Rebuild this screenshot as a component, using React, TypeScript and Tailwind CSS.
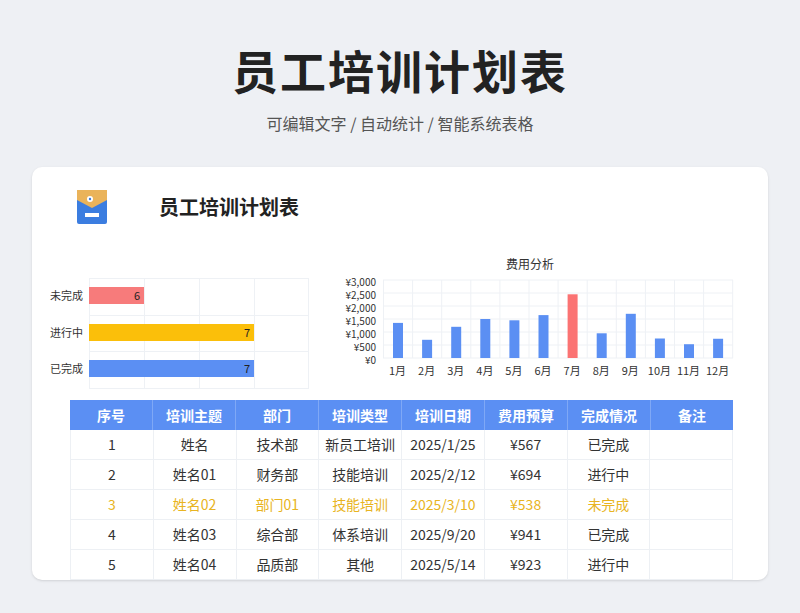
const F = { fontFamily: '"Noto Sans CJK SC","Noto Sans",sans-serif' };
const months = [1350, 700, 1200, 1500, 1450, 1650, 2450, 950, 1700, 750, 530, 740];
const rows = [
  ["1", "姓名", "技术部", "新员工培训", "2025/1/25", "¥567", "已完成"],
  ["2", "姓名01", "财务部", "技能培训", "2025/2/12", "¥694", "进行中"],
  ["3", "姓名02", "部门01", "技能培训", "2025/3/10", "¥538", "未完成"],
  ["4", "姓名03", "综合部", "体系培训", "2025/9/20", "¥941", "已完成"],
  ["5", "姓名04", "品质部", "其他", "2025/5/14", "¥923", "进行中"],
];
const heads = ["序号", "培训主题", "部门", "培训类型", "培训日期", "费用预算", "完成情况", "备注"];

export default function App() {
  return (
    <div style={F} className="w-[800px] h-[613px] bg-[#eef0f4] flex flex-col items-center overflow-hidden">
      <div className="mt-[38px] h-[62px] text-[46px] leading-[62px] font-bold text-[#222] tracking-[2px]">员工培训计划表</div>
      <div className="mt-[11px] text-[16px] leading-[24px] text-[#555]">可编辑文字 / 自动统计 / 智能系统表格</div>
      <div className="mt-[32px] w-[736px] h-[413px] bg-white rounded-[10px] overflow-hidden flex flex-col shadow-sm">
        <div className="flex items-center h-[78px] pt-[6px]">
          <svg width="30" height="34" viewBox="0 0 30 34" className="ml-[45px]">
            <rect x="0" y="0" width="30" height="34" rx="2" fill="#3b7de0" />
            <path d="M0 0H30V10L15 18L0 10Z" fill="#eab35a" />
            <circle cx="13" cy="9" r="3" fill="#fff" />
            <circle cx="13" cy="9" r="1.2" fill="#3b7de0" />
            <rect x="8" y="23" width="14" height="4" fill="#fff" />
          </svg>
          <div className="ml-[52px] text-[20px] font-bold text-[#222]">员工培训计划表</div>
        </div>
        <div className="flex h-[160px]">
          <div className="relative w-[300px] h-[160px]">
            {[57, 112, 167, 222, 276].map((x) => (
              <div key={x} className="absolute top-[38px] h-[110px] w-px bg-[#eef1f5]" style={{ left: x }} />
            ))}
            {[38, 75, 111, 148].map((y) => (
              <div key={y} className="absolute left-[57px] w-[220px] h-px bg-[#eef1f5]" style={{ top: y }} />
            ))}
            {[
              ["未完成", 55, "#f77b7b", "6", 47],
              ["进行中", 165, "#fbbf0a", "7", 84],
              ["已完成", 165, "#5b8ff3", "7", 120],
            ].map(([l, w, c, v, y]) => (
              <div key={l as string} className="absolute left-0 flex items-center h-[17px]" style={{ top: y as number }}>
                <div className="w-[57px] pr-[6px] text-right text-[11px] text-[#333]">{l}</div>
                <div className="h-[17px] flex items-center justify-end pr-[4px] text-[11px] text-[#222]" style={{ width: w as number, background: c as string }}>{v}</div>
              </div>
            ))}
          </div>
          <div className="relative flex-1 h-[160px]">
            <div className="absolute left-[174px] top-[15px] text-[12px] text-[#333]">费用分析</div>
            {["¥3,000", "¥2,500", "¥2,000", "¥1,500", "¥1,000", "¥500", "¥0"].map((t, i) => (
              <div key={t} className="absolute w-[50px] text-right text-[10px] leading-[11px] text-[#333]" style={{ left: -6, top: 36 + i * 13 }}>{t}</div>
            ))}
            <svg className="absolute left-[51px] top-[38px]" width="352" height="82">
              {[0, 1, 2, 3, 4, 5, 6].map((i) => (
                <line key={i} x1="0" x2="350" y1={2 + i * 13} y2={2 + i * 13} stroke="#eef1f5" />
              ))}
              {Array.from({ length: 13 }).map((_, i) => (
                <line key={i} x1={0.5 + i * 29.1} x2={0.5 + i * 29.1} y1="2" y2="80" stroke="#eef1f5" />
              ))}
              {months.map((v, i) => {
                const h = (v / 3000) * 78;
                return <rect key={i} x={10 + i * 29.1} y={80 - h} width="10" height={h} fill={i === 6 ? "#fb7373" : "#5b8ff3"} />;
              })}
            </svg>
            <div className="absolute left-[51px] top-[122px] flex text-[11px] text-[#333]">
              {months.map((_, i) => (
                <div key={i} className="w-[29.1px] text-center">{i + 1}月</div>
              ))}
            </div>
          </div>
        </div>
        <div className="ml-[38px] w-[663px]">
          <div className="flex h-[30px] bg-[#5b8ff3] text-white text-[14px] font-bold">
            {heads.map((h) => (
              <div key={h} className="flex-1 flex items-center justify-center border-r border-[#7fa8f6] last:border-r-0">{h}</div>
            ))}
          </div>
          {rows.map((r, ri) => (
            <div key={ri} className={`flex h-[30px] text-[14px] border-b border-[#edf0f4] ${ri === 2 ? "text-[#e8b422]" : "text-[#333]"}`}>
              {[...r, ""].map((c, i) => (
                <div key={i} className="flex-1 flex items-center justify-center border-r border-l-0 border-[#edf0f4] first:border-l">{c}</div>
              ))}
            </div>
          ))}
        </div>
      </div>
    </div>
  );
}
